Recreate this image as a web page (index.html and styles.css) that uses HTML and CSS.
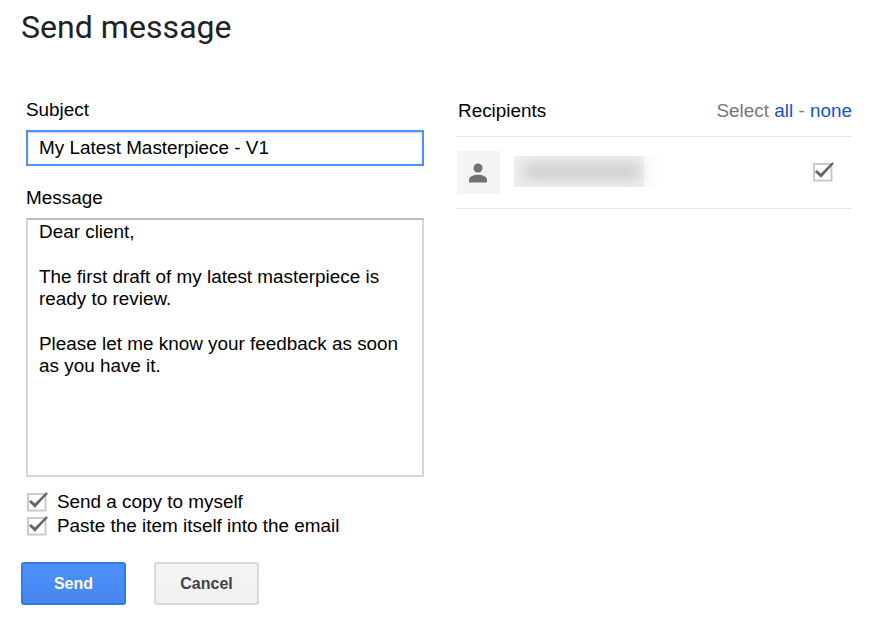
FILE: index.html
```
<!DOCTYPE html>
<html lang="en">
<head>
<meta charset="utf-8">
<title>Send message</title>
<link rel="stylesheet" href="styles.css">
</head>
<body>
<svg class="defs" width="0" height="0" aria-hidden="true">
  <symbol id="checked" viewBox="0 0 22 20">
    <rect x="1" y="2" width="17.5" height="16.6" fill="#fff" stroke="#c6c6c6" stroke-width="1.8"/>
    <path d="M1.8 9.8 L4 8 L7.8 11.4 L19.2 .3 L21 1.6 L8 15.8 Z" fill="#666"/>
  </symbol>
</svg>
<main class="dialog">
  <h1 class="title"><span>Send message</span></h1>
  <div class="columns">
    <form class="compose">
      <label class="label">Subject</label>
      <div class="subject">My Latest Masterpiece - V1</div>
      <label class="label label-message">Message</label>
      <div class="message">Dear client,

The first draft of my latest masterpiece is
ready to review.

Please let me know your feedback as soon
as you have it.</div>
      <div class="options">
        <div class="option"><svg class="check"><use href="#checked"/></svg><span>Send a copy to myself</span></div>
        <div class="option"><svg class="check"><use href="#checked"/></svg><span>Paste the item itself into the email</span></div>
      </div>
    </form>
    <section class="recipients">
      <header class="recipients-head">
        <span>Recipients</span>
        <span class="select">Select <a>all</a> - <a>none</a></span>
      </header>
      <div class="recipient">
        <div class="avatar"><svg width="18" height="20" viewBox="0 0 18 20"><circle cx="9" cy="5" r="4.5" fill="#717171"/><path d="M0 19.5V16.5C0 13.5 5 11.7 9 11.7S18 13.5 18 16.5V19.5Z" fill="#717171"/></svg></div>
        <div class="redacted"></div>
        <svg class="check"><use href="#checked"/></svg>
      </div>
    </section>
  </div>
  <footer class="actions">
    <div class="button primary">Send</div>
    <div class="button">Cancel</div>
  </footer>
</main>
</body>
</html>
```
FILE: styles.css
```
* { box-sizing: border-box; }
body {
  margin: 0;
  background: #fff;
  color: #000;
  font: 18.9px/22px "Liberation Sans", Arial, sans-serif;
}
.defs { display: block; }
.dialog { height: 622px; padding: 8px 22px 0 21px; overflow: hidden; }
.title {
  margin: 0;
  height: 91px;
  color: #202124;
  font: 400 32px/38px Roboto, sans-serif;
  letter-spacing: 0.05px;
}
.columns { display: flex; height: 463px; }
.compose { width: 398px; margin-left: 5px; }
.label { display: block; height: 31px; }
.subject {
  height: 36px;
  padding: 5px 11px;
  border: 2px solid #4d90fe;
  box-shadow: inset 0 1px 2px #ccc;
  white-space: nowrap;
}
.label-message { margin-top: 21px; }
.message {
  height: 259px;
  padding: 1px 11px;
  border: 2px solid #d5d5d5;
  border-top-color: #bdbdbd;
  line-height: 22.33px;
  white-space: pre;
}
.options { margin-top: 13px; }
.option { display: flex; height: 24px; gap: 8px; padding-left: 1px; line-height: 24px; }
.check { width: 22px; height: 20px; flex: none; margin-top: 2px; }
.recipients { width: 397px; margin-left: 32px; }
.recipients-head {
  display: flex;
  justify-content: space-between;
  height: 38px;
  padding: 1px 1px 0 2px;
  border-bottom: 1px solid #e8e8e8;
}
.select { color: #777; }
.select a { color: #1551d1; }
.recipient {
  display: flex;
  height: 72px;
  padding: 14px 18px 0 1px;
  border-bottom: 1px solid #e8e8e8;
}
.avatar {
  display: flex;
  align-items: center;
  justify-content: center;
  width: 43px;
  height: 43px;
  padding-right: 2px;
  background: #f4f4f4;
}
.redacted {
  position: relative;
  width: 148px;
  height: 31px;
  margin: 5px 0 0 14px;
  overflow: hidden;
  background: linear-gradient(90deg, #efefef 130px, #fafafa 130px, #fff);
}
.redacted::before {
  content: "";
  position: absolute;
  inset: 7px 22px 7px 10px;
  background: #cdcdcd;
  filter: blur(7px);
}
.recipient .check { margin: 11px 0 0 auto; }
.actions { display: flex; gap: 28px; }
.button {
  width: 105px;
  height: 43px;
  border: 2px solid #d9d9d9;
  border-radius: 3px;
  background: linear-gradient(#f5f5f5, #f0f0f0);
  color: #444;
  font-size: 16px;
  font-weight: bold;
  line-height: 39px;
  text-align: center;
}
.primary {
  border-color: #3079ed;
  background: linear-gradient(#4d90fe, #4787ed);
  color: #fff;
}
```
